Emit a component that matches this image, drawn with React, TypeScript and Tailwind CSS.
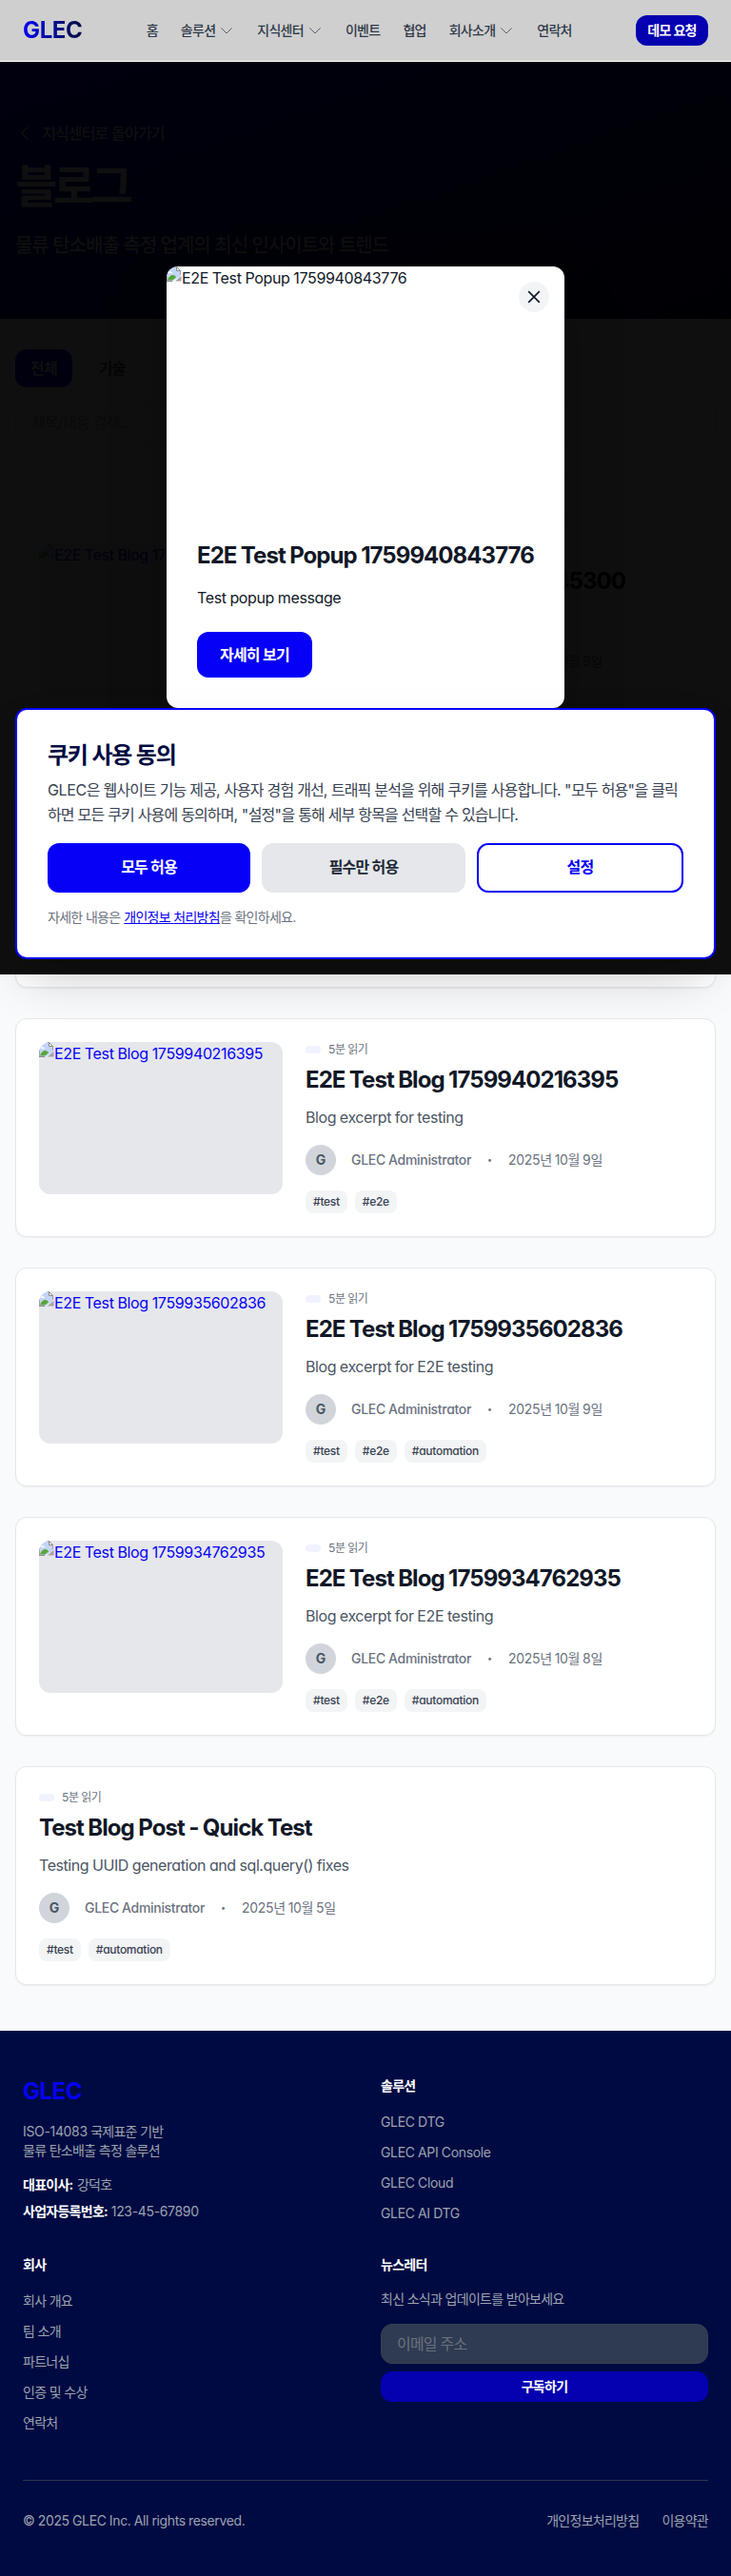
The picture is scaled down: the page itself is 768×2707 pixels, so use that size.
const Icon = () => (
  <svg className="h-4 w-4 shrink-0" viewBox="0 0 16 16">
    <path d="M0 .5h10.500l4 4v6l-8 5H0z" fill="#c3d5f5" />
    <path d="M0 .5h10.500l4 4V9M.5.5v15" fill="none" stroke="#a3a3a3" />
    <path d="M10.500.5v4h4z" fill="#fff" stroke="#8a8a8a" />
    <path d="M2 6.500c0-1.500 2-2 2.500-.8 1.500-.4 2 1 1 1.300h-3z" fill="#fff" />
    <path d="M1 14.500c.8-3 3-5.500 5.500-5.500 1.500 0 3 1 3.500 2.500l-4 3z" fill="#57a639" />
    <path d="M0 15.500h6" stroke="#8a8a8a" />
    <path d="M15.500 10v5.500H9z" fill="#a3a3a3" />
  </svg>
);

const HANGUL = /([\uAC00-\uD7A3]+)/;

/* Hangul and Latin runs are tracked separately. */
const T = ({
  children,
  latin = 'tracking-[-0.024em]',
  hangul = 'tracking-[-0.052em]',
}: {
  children: string;
  latin?: string;
  hangul?: string;
}) => (
  <span className="[word-spacing:-0.015em]">
    {children
      .split(HANGUL)
      .filter(Boolean)
      .map((part, i) => (
        <span key={i} className={HANGUL.test(part) ? hangul : latin}>
          {part}
        </span>
      ))}
  </span>
);

const BOLD = 'tracking-[-0.039em]';
const MEDIUM = 'tracking-[-0.022em]';

const Chevron = () => (
  <svg className="h-4 w-4" viewBox="0 0 24 24" fill="none" stroke="currentColor" strokeWidth="1.3" opacity="0.85">
    <path d="M3.500 8l8.500 8.500 8.500-8.500" />
  </svg>
);

const nav = [
  { label: '홈' },
  { label: '솔루션', menu: true },
  { label: '지식센터', menu: true },
  { label: '이벤트' },
  { label: '협업' },
  { label: '회사소개', menu: true },
  { label: '연락처' },
];

type Post = { title: string; excerpt: string; date: string; tags: string[]; image?: boolean };

const latest: Post = {
  title: 'E2E Test Blog 1759940845300',
  excerpt: 'Blog excerpt for testing',
  date: '2025년 10월 9일',
  tags: ['#test', '#e2e'],
  image: true,
};

const posts: Post[] = [
  { title: 'E2E Test Blog 1759940216395', excerpt: 'Blog excerpt for testing', date: '2025년 10월 9일', tags: ['#test', '#e2e'], image: true },
  { title: 'E2E Test Blog 1759935602836', excerpt: 'Blog excerpt for E2E testing', date: '2025년 10월 9일', tags: ['#test', '#e2e', '#automation'], image: true },
  { title: 'E2E Test Blog 1759934762935', excerpt: 'Blog excerpt for E2E testing', date: '2025년 10월 8일', tags: ['#test', '#e2e', '#automation'], image: true },
  { title: 'Test Blog Post - Quick Test', excerpt: 'Testing UUID generation and sql.query() fixes', date: '2025년 10월 5일', tags: ['#test', '#automation'] },
];

const Card = ({ post }: { post?: Post }) => (
  <article className="flex h-[230px] gap-6 rounded-xl border border-[#e5e7eb] bg-white p-6 shadow-[0_1px_2px_rgba(0,0,0,0.05)]">
    {post?.image && (
      <div className="flex h-40 w-64 shrink-0 overflow-hidden rounded-xl bg-[#e5e7eb] text-base text-[#0600f7]">
        <Icon />
        <span className="whitespace-nowrap"><T latin={MEDIUM}>{post.title}</T></span>
      </div>
    )}
    {post && (
      <div className="min-w-0 flex-1">
        <div className="flex h-4 items-center gap-2 text-xs text-[#6b7280]">
          <span className="h-2 w-4 rounded bg-[#f0f3ff]" />
          <span><T>5분 읽기</T></span>
        </div>
        <h2 className="mt-2 text-2xl leading-8 font-bold text-[#111827]"><T latin={BOLD}>{post.title}</T></h2>
        <p className="mt-[11px] text-base leading-6 text-[#4b5563]"><T latin="tracking-[-0.027em]">{post.excerpt}</T></p>
        <div className="mt-[17px] flex h-8 items-center gap-4 text-sm text-[#6b7280]">
          <span className="flex h-8 w-8 items-center justify-center rounded-full bg-[#d1d5db] text-sm font-bold text-[#4b5563]">G</span>
          <span className="font-medium"><T latin={MEDIUM}>GLEC Administrator</T></span>
          <span className="flex w-[7px] justify-center text-[9px]">•</span>
          <span><T>{post.date}</T></span>
        </div>
        <div className="mt-4 flex gap-2 text-xs leading-4 font-medium text-[#374151]">
          {post.tags.map((tag) => (
            <span key={tag} className="rounded-lg bg-[#f3f4f6] px-2 py-1"><T>{tag}</T></span>
          ))}
        </div>
      </div>
    )}
  </article>
);

const Links = ({ title, items }: { title: string; items: string[] }) => (
  <div>
    <h3 className="text-sm leading-5 font-bold text-white"><T>{title}</T></h3>
    <ul className="mt-4 flex flex-col gap-2">
      {items.map((item) => (
        <li key={item} className="h-6 text-sm leading-6"><T>{item}</T></li>
      ))}
    </ul>
  </div>
);

export default function App() {
  return (
    <div className="relative h-[2707px] w-full overflow-hidden bg-[#f9fafb] font-['Inter','Noto_Sans_CJK_KR',sans-serif] leading-6 [font-feature-settings:'cv11']">
      <header className="flex h-[65px] items-center justify-between border-b border-white bg-[#cfcfcf] px-6 text-sm font-medium text-[#2f3a48]">
        <span className="bg-linear-to-r from-[#0600f7] to-[#000a42] bg-clip-text text-2xl font-bold tracking-[-0.015em] text-transparent">GLEC</span>
        <nav className="flex items-center gap-6">
          {nav.map((item) => (
            <span key={item.label} className="flex items-center gap-1">
              <T>{item.label}</T>
              {item.menu && <Chevron />}
            </span>
          ))}
        </nav>
        <span className="w-[76px] rounded-xl bg-[#0500b0] py-1.5 text-center leading-5 font-bold text-white"><T>데모 요청</T></span>
      </header>

      <section className="h-[270px] bg-linear-to-br from-[#00000f] to-[#000004] px-4 pt-[63px] text-[#0f0f0f]">
        <div className="flex h-6 items-center gap-2 font-medium">
          <svg className="h-5 w-5" viewBox="0 0 24 24" fill="none" stroke="currentColor" strokeWidth="1.5">
            <path d="M15.750 20L8.250 12l7.500-8" />
          </svg>
          <T>지식센터로 돌아가기</T>
        </div>
        <h1 className="mt-[14px] text-5xl leading-[60px] font-bold"><T hangul="tracking-[-0.09em]">블로그</T></h1>
        <p className="mt-[18px] text-xl leading-7 font-medium"><T>물류 탄소배출 측정 업계의 최신 인사이트와 트렌드</T></p>
      </section>

      <section className="flex h-[163px] flex-col gap-4 border-b border-[#0e0e0e] bg-[#0f0f0f] px-4 py-8 font-semibold">
        <div className="flex gap-3">
          <span className="rounded-xl bg-[#00000f] px-4 py-2 text-[#0f0f0f]"><T>전체</T></span>
          <span className="px-4 py-2 text-[#040506]"><T>기술</T></span>
        </div>
        <div className="h-[42px] rounded-xl border border-[#0d0d0e] px-4 py-2 font-normal text-[#0a0a0b]"><T>제목/내용 검색...</T></div>
      </section>

      <main className="flex flex-col gap-8 px-4 py-12">
        <Card post={latest} />
        <Card />
        {posts.map((post) => (
          <Card key={post.title} post={post} />
        ))}
      </main>

      <footer className="h-[573px] bg-[#000a42] px-6 pt-12 text-sm text-[#9ca3af]">
        <div className="grid grid-cols-2 gap-x-8">
          <div className="h-[188px]">
            <div className="text-2xl leading-8 font-bold tracking-[-0.02em] text-[#0600f7]">GLEC</div>
            <p className="mt-4 leading-5"><T>ISO-14083 국제표준 기반</T><br /><T>물류 탄소배출 측정 솔루션</T></p>
            <p className="mt-4 leading-5"><b className="font-bold text-white"><T>대표이사:</T></b> <T>강덕호</T></p>
            <p className="mt-2 leading-5"><b className="font-bold text-white"><T>사업자등록번호:</T></b><T> 123-45-67890</T></p>
          </div>
          <Links title="솔루션" items={['GLEC DTG', 'GLEC API Console', 'GLEC Cloud', 'GLEC AI DTG']} />
          <Links title="회사" items={['회사 개요', '팀 소개', '파트너십', '인증 및 수상', '연락처']} />
          <div>
            <h3 className="leading-5 font-bold text-white"><T>뉴스레터</T></h3>
            <p className="mt-4 leading-5"><T>최신 소식과 업데이트를 받아보세요</T></p>
            <div className="mt-4 h-[42px] rounded-xl border border-[#374151] bg-[#2f3b52] px-4 py-2 text-base text-[#6b7280]"><T>이메일 주소</T></div>
            <div className="mt-2 h-8 rounded-xl bg-[#0500b0] text-center leading-8 font-bold text-white"><T>구독하기</T></div>
          </div>
        </div>
        <div className="mt-12 flex justify-between border-t border-[#2b3950] pt-8">
          <span><T latin="tracking-[-0.027em]">© 2025 GLEC Inc. All rights reserved.</T></span>
          <span className="flex gap-6"><span><T>개인정보처리방침</T></span><span><T>이용약관</T></span></span>
        </div>
      </footer>

      <div className="absolute inset-x-0 top-[498px] h-[526px] bg-black/94" />

      <div className="absolute top-[280px] left-[175px] h-[464px] w-[418px] overflow-hidden rounded-xl bg-white text-[#111827] shadow-[0_25px_50px_-12px_rgba(0,0,0,0.5)]">
        <div className="flex h-64">
          <Icon />
          <span><T latin={MEDIUM}>E2E Test Popup 1759940843776</T></span>
        </div>
        <div className="p-8">
          <h2 className="text-2xl leading-8 font-bold whitespace-nowrap"><T latin={BOLD}>E2E Test Popup 1759940843776</T></h2>
          <p className="mt-4"><T>Test popup message</T></p>
          <span className="mt-6 inline-block rounded-xl bg-[#0600f7] px-6 py-3 font-semibold text-white"><T>자세히 보기</T></span>
        </div>
        <span className="absolute top-4 right-4 flex h-8 w-8 items-center justify-center rounded-full bg-[#f3f4f6]">
          <svg className="h-5 w-5" viewBox="0 0 24 24" fill="none" stroke="#111827" strokeWidth="2"><path d="M5 5l14 14M19 5L5 19" /></svg>
        </span>
      </div>

      <div className="absolute top-[744px] right-4 left-4 h-[264px] rounded-xl border-2 border-[#0600f7] bg-white p-8 shadow-[0_25px_50px_-12px_rgba(0,0,0,0.25)]">
        <h2 className="text-2xl leading-8 font-bold text-[#000a42]"><T>쿠키 사용 동의</T></h2>
        <p className="mt-[7px] leading-[26px] whitespace-nowrap text-[#374151]"><T hangul="tracking-[-0.055em]">GLEC은 웹사이트 기능 제공, 사용자 경험 개선, 트래픽 분석을 위해 쿠키를 사용합니다. "모두 허용"을 클릭</T><br /><T hangul="tracking-[-0.055em]">하면 모든 쿠키 사용에 동의하며, "설정"을 통해 세부 항목을 선택할 수 있습니다.</T></p>
        <div className="mt-[17px] flex gap-3 text-center leading-[51px] font-bold">
          <span className="h-[52px] w-[213px] rounded-xl bg-[#0600f7] text-white"><T>모두 허용</T></span>
          <span className="h-[52px] w-[214px] rounded-xl bg-[#e5e7eb] text-[#1f2937]"><T>필수만 허용</T></span>
          <span className="h-[52px] flex-1 rounded-xl border-2 border-[#0600f7] leading-[47px] text-[#0600f7]"><T>설정</T></span>
        </div>
        <p className="mt-4 text-sm leading-5 text-[#6b7280]"><T>자세한 내용은</T> <span className="text-[#0600f7] underline"><T>개인정보 처리방침</T></span><T>을 확인하세요.</T></p>
      </div>
    </div>
  );
}
